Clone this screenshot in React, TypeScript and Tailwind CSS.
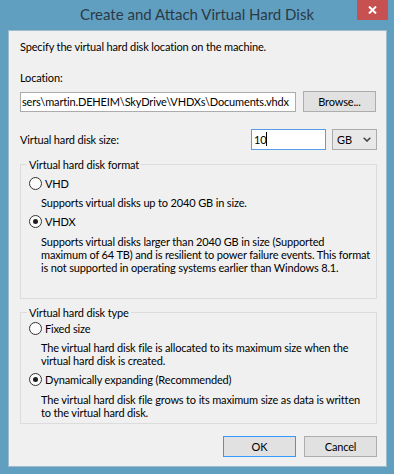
function Radio({ checked, label }: { checked?: boolean; label: string }) {
  return (
    <div className="flex items-center h-[13px] pl-[8px]">
      <span className="flex items-center justify-center w-[13px] h-[13px] rounded-full border border-[#333333] bg-[#fcfcfc]">
        {checked && <span className="w-[5px] h-[5px] rounded-full bg-[#1e1e1e]" />}
      </span>
      <span className="ml-[3px]">{label}</span>
    </div>
  );
}

// description text under a radio; lines are broken as in the original dialog
function Desc({ lines, className = '' }: { lines: string[]; className?: string }) {
  return (
    <div className={`pl-[20px] whitespace-nowrap ${className}`}>
      {lines.map((l) => (
        <p key={l}>{l}</p>
      ))}
    </div>
  );
}

function GroupBox({
  title,
  className = '',
  children,
}: {
  title: string;
  className?: string;
  children: React.ReactNode;
}) {
  return (
    <fieldset className={`border border-[#dcdcdc] min-w-0 ${className}`}>
      <legend className="ml-[6px] px-[2px] h-[13px] leading-[13px]">{title}</legend>
      {children}
    </fieldset>
  );
}

function WinButton({ label, primary }: { label: string; primary?: boolean }) {
  return (
    <div
      className={`flex items-center justify-center h-[21px] w-[73px] bg-[#e1e1e1] border ${
        primary ? 'border-[#3399ff]' : 'border-[#adadad]'
      }`}
    >
      {label}
    </div>
  );
}

export default function App() {
  return (
    <div
      className="w-[394px] h-[474px] bg-[#619fc1] text-black text-[11px] leading-[13px] tracking-[-0.15px]"
      style={{ fontFamily: 'Lato, sans-serif' }}
    >
      {/* title bar */}
      <div className="relative h-[30px] flex justify-center pt-[5px]">
        <span className="text-[15px] leading-[18px] tracking-normal text-[#2b3a46]">
          Create and Attach Virtual Hard Disk
        </span>
        <div className="absolute top-0 right-[6px] w-[31px] h-[20px] bg-[#c75050] flex items-center justify-center">
          <svg width="9" height="8" viewBox="0 0 9 8">
            <path d="M1 0.5 L8 7.5 M8 0.5 L1 7.5" stroke="#ffffff" strokeWidth="2" />
          </svg>
        </div>
      </div>

      {/* client area */}
      <div className="ml-[8px] w-[379px] h-[437px] bg-[#f0f0f0] border border-[#9fbccf] pl-[11px] pr-[9px] pt-[9px] flex flex-col">
        <p>Specify the virtual hard disk location on the machine.</p>
        <p className="mt-[18px]">Location:</p>

        <div className="mt-[7px] flex items-center h-[21px]">
          <div className="w-[276px] h-[20px] bg-white border border-[#acacac] pl-[1px] flex items-center overflow-hidden whitespace-nowrap">
            sers\martin.DEHEIM\SkyDrive\VHDXs\Documents.vhdx
          </div>
          <div className="ml-[7px]">
            <WinButton label="Browse..." />
          </div>
        </div>

        <div className="mt-[16px] flex items-center h-[22px]">
          <span className="flex-1">Virtual hard disk size:</span>
          <div className="w-[75px] h-[21px] bg-white border border-[#569de5] pl-[2px] flex items-center">
            <span>10</span>
            <span className="w-px h-[14px] bg-black" />
          </div>
          <div className="ml-[6px] w-[45px] h-[21px] bg-[#e8e8e8] border border-[#acacac] flex items-center pl-[4px] pr-[5px]">
            <span className="flex-1">GB</span>
            <svg width="8" height="5" viewBox="0 0 8 5">
              <path d="M0.7 0.7 L4 4 L7.3 0.7" fill="none" stroke="#444444" strokeWidth="1.6" />
            </svg>
          </div>
        </div>

        <GroupBox title="Virtual hard disk format" className="mt-[8px] pb-[24px]">
          <div className="mt-[6px]">
            <Radio label="VHD" />
          </div>
          <Desc className="mt-[6px]" lines={['Supports virtual disks up to 2040 GB in size.']} />
          <div className="mt-[6px]">
            <Radio checked label="VHDX" />
          </div>
          <Desc
            className="mt-[7px]"
            lines={[
              'Supports virtual disks larger than 2040 GB in size (Supported',
              'maximum of 64 TB) and is resilient to power failure events. This format',
              'is not supported in operating systems earlier than Windows 8.1.',
            ]}
          />
        </GroupBox>

        <GroupBox title="Virtual hard disk type" className="mt-[7px] pb-[4px]">
          <div className="mt-[3px]">
            <Radio label="Fixed size" />
          </div>
          <Desc
            className="mt-[6px]"
            lines={[
              'The virtual hard disk file is allocated to its maximum size when the',
              'virtual hard disk is created.',
            ]}
          />
          <div className="mt-[6px]">
            <Radio checked label="Dynamically expanding (Recommended)" />
          </div>
          <Desc
            className="mt-[7px]"
            lines={[
              'The virtual hard disk file grows to its maximum size as data is written',
              'to the virtual hard disk.',
            ]}
          />
        </GroupBox>

        <div className="mt-[12px] flex justify-end gap-[8px]">
          <WinButton label="OK" primary />
          <WinButton label="Cancel" />
        </div>
      </div>
    </div>
  );
}
